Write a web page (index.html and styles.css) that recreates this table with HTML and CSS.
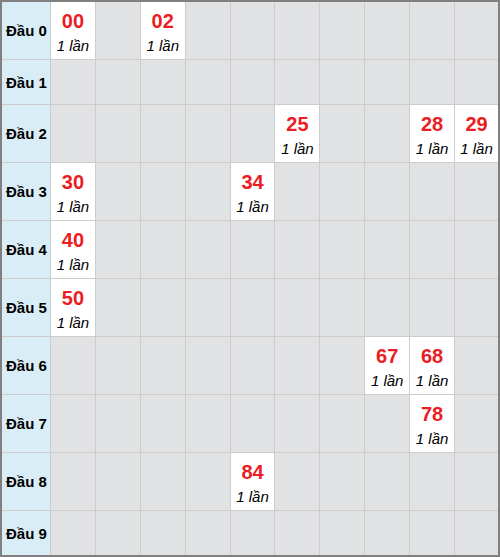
FILE: index.html
```html
<!DOCTYPE html>
<html lang="vi">
<head>
<meta charset="utf-8">
<title>Thống kê đầu</title>
<link rel="stylesheet" href="styles.css">
</head>
<body>
<div class="board">
  <div class="head">Đầu 0</div>
  <div class="cell hit"><span class="num">00</span><span class="cnt">1 lần</span></div>
  <div class="cell"></div>
  <div class="cell hit"><span class="num">02</span><span class="cnt">1 lần</span></div>
  <div class="cell"></div><div class="cell"></div><div class="cell"></div><div class="cell"></div><div class="cell"></div><div class="cell"></div><div class="cell"></div>

  <div class="head">Đầu 1</div>
  <div class="cell"></div><div class="cell"></div><div class="cell"></div><div class="cell"></div><div class="cell"></div><div class="cell"></div><div class="cell"></div><div class="cell"></div><div class="cell"></div><div class="cell"></div>

  <div class="head">Đầu 2</div>
  <div class="cell"></div><div class="cell"></div><div class="cell"></div><div class="cell"></div><div class="cell"></div>
  <div class="cell hit"><span class="num">25</span><span class="cnt">1 lần</span></div>
  <div class="cell"></div><div class="cell"></div>
  <div class="cell hit"><span class="num">28</span><span class="cnt">1 lần</span></div>
  <div class="cell hit"><span class="num">29</span><span class="cnt">1 lần</span></div>

  <div class="head">Đầu 3</div>
  <div class="cell hit"><span class="num">30</span><span class="cnt">1 lần</span></div>
  <div class="cell"></div><div class="cell"></div><div class="cell"></div>
  <div class="cell hit"><span class="num">34</span><span class="cnt">1 lần</span></div>
  <div class="cell"></div><div class="cell"></div><div class="cell"></div><div class="cell"></div><div class="cell"></div>

  <div class="head">Đầu 4</div>
  <div class="cell hit"><span class="num">40</span><span class="cnt">1 lần</span></div>
  <div class="cell"></div><div class="cell"></div><div class="cell"></div><div class="cell"></div><div class="cell"></div><div class="cell"></div><div class="cell"></div><div class="cell"></div><div class="cell"></div>

  <div class="head">Đầu 5</div>
  <div class="cell hit"><span class="num">50</span><span class="cnt">1 lần</span></div>
  <div class="cell"></div><div class="cell"></div><div class="cell"></div><div class="cell"></div><div class="cell"></div><div class="cell"></div><div class="cell"></div><div class="cell"></div><div class="cell"></div>

  <div class="head">Đầu 6</div>
  <div class="cell"></div><div class="cell"></div><div class="cell"></div><div class="cell"></div><div class="cell"></div><div class="cell"></div><div class="cell"></div>
  <div class="cell hit"><span class="num">67</span><span class="cnt">1 lần</span></div>
  <div class="cell hit"><span class="num">68</span><span class="cnt">1 lần</span></div>
  <div class="cell"></div>

  <div class="head">Đầu 7</div>
  <div class="cell"></div><div class="cell"></div><div class="cell"></div><div class="cell"></div><div class="cell"></div><div class="cell"></div><div class="cell"></div><div class="cell"></div>
  <div class="cell hit"><span class="num">78</span><span class="cnt">1 lần</span></div>
  <div class="cell"></div>

  <div class="head">Đầu 8</div>
  <div class="cell"></div><div class="cell"></div><div class="cell"></div><div class="cell"></div>
  <div class="cell hit"><span class="num">84</span><span class="cnt">1 lần</span></div>
  <div class="cell"></div><div class="cell"></div><div class="cell"></div><div class="cell"></div><div class="cell"></div>

  <div class="head">Đầu 9</div>
  <div class="cell"></div><div class="cell"></div><div class="cell"></div><div class="cell"></div><div class="cell"></div><div class="cell"></div><div class="cell"></div><div class="cell"></div><div class="cell"></div><div class="cell"></div>
</div>
</body>
</html>
```

FILE: styles.css
```css
html, body {
  margin: 0;
  padding: 0;
  background: #ffffff;
}

body {
  font-family: "Liberation Sans", Arial, sans-serif;
}

.board {
  box-sizing: border-box;
  width: 500px;
  height: 557px;
  border: 2px solid #808080;
  background: #cccccc;
  display: grid;
  grid-template-columns: 48px repeat(9, 43.9px) 1fr;
  grid-auto-rows: minmax(44px, auto);
  gap: 1px;
}

.head {
  background: #d9edf7;
  display: flex;
  align-items: center;
  padding-left: 4px;
  font-weight: bold;
  font-size: 15px;
  color: #000000;
}

.cell {
  background: #e1e2e4;
}

.cell.hit {
  background: #ffffff;
  display: flex;
  flex-direction: column;
  align-items: center;
  padding-top: 7px;
}

.num {
  color: #ed1c24;
  font-weight: bold;
  font-size: 20px;
  line-height: 24px;
}

.cnt {
  font-style: italic;
  font-size: 15px;
  line-height: 26px;
  color: #000000;
}
```
